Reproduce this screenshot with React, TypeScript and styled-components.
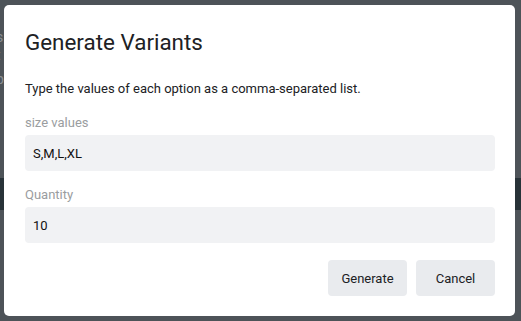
import React, { useState } from 'react'
import styled, { createGlobalStyle } from 'styled-components'

const GlobalStyle = createGlobalStyle`
  html, body {
    margin: 0;
    padding: 0;
    width: 521px;
    height: 321px;
    overflow: hidden;
    font-family: Roboto, "Liberation Sans", sans-serif;
  }
`;

export default function App() {
  const [sizes, setSizes] = useState('S,M,L,XL');
  const [quantity, setQuantity] = useState('10');

  return (
    <>
      <GlobalStyle />
      <Page>
        {/* 모달 뒤에 깔린 페이지 */}
        <PageLine>s</PageLine>
        <PageLine>t</PageLine>
        <PageLine $gap={6}>b</PageLine>
        <PageBand />
      </Page>

      <Overlay>
        <Modal>
          <Title>Generate Variants</Title>
          <Description>Type the values of each option as a comma-separated list.</Description>

          <Field>
            <Label>size values</Label>
            <Input value={sizes} onChange={(e) => setSizes(e.target.value)} />
          </Field>

          <Field>
            <Label>Quantity</Label>
            <Input value={quantity} onChange={(e) => setQuantity(e.target.value)} />
          </Field>

          <Actions>
            <ActionButton>Generate</ActionButton>
            <ActionButton>Cancel</ActionButton>
          </Actions>
        </Modal>
      </Overlay>
    </>
  )
}

const Page = styled.div`
  width: 521px;
  height: 321px;
  background: #4d5358;
  padding-top: 28px;
  box-sizing: border-box;
  display: flex;
  flex-direction: column;
`;

const PageLine = styled.div<{ $gap?: number }>`
  font-size: 14px;
  line-height: 18px;
  color: #8a8f93;
  margin-left: -4px;
  margin-top: ${(p) => p.$gap ?? 0}px;
`;

const PageBand = styled.div`
  margin-top: 90px;
  height: 32px;
  background: #283238;
`;

const Overlay = styled.div`
  position: absolute;
  inset: 0;
  display: flex;
  align-items: flex-start;
  justify-content: flex-start;
  padding: 5px 6px 5px 4px;
`;

const Modal = styled.div`
  width: 511px;
  height: 311px;
  box-sizing: border-box;
  background: #ffffff;
  border-radius: 5px;
  padding: 24px 20px 20px 21px;
  display: flex;
  flex-direction: column;
`;

const Title = styled.h2`
  margin: 0;
  font-size: 22.4px;
  line-height: 26px;
  font-weight: 400;
  color: #202124;
`;

const Description = styled.p`
  margin: 25px 0 17px;
  font-size: 13px;
  line-height: 18px;
  color: #202124;
`;

const Field = styled.div`
  display: flex;
  flex-direction: column;
  gap: 4px;
  margin-bottom: 16px;
`;

const Label = styled.label`
  font-size: 13px;
  line-height: 16px;
  color: #9a9da0;
`;

const Input = styled.input`
  height: 36px;
  box-sizing: border-box;
  border: none;
  outline: none;
  border-radius: 4px;
  background: #f1f2f4;
  padding: 0 8px;
  font-family: Roboto, "Liberation Sans", sans-serif;
  font-size: 13px;
  color: #111;
`;

const Actions = styled.div`
  display: flex;
  justify-content: flex-end;
  gap: 9px;
  margin-top: 1px;
`;

const ActionButton = styled.button`
  width: 79px;
  height: 36px;
  border: none;
  border-radius: 4px;
  background: #e9ebee;
  font-family: Roboto, "Liberation Sans", sans-serif;
  font-size: 13px;
  color: #202124;
  cursor: pointer;
`;
